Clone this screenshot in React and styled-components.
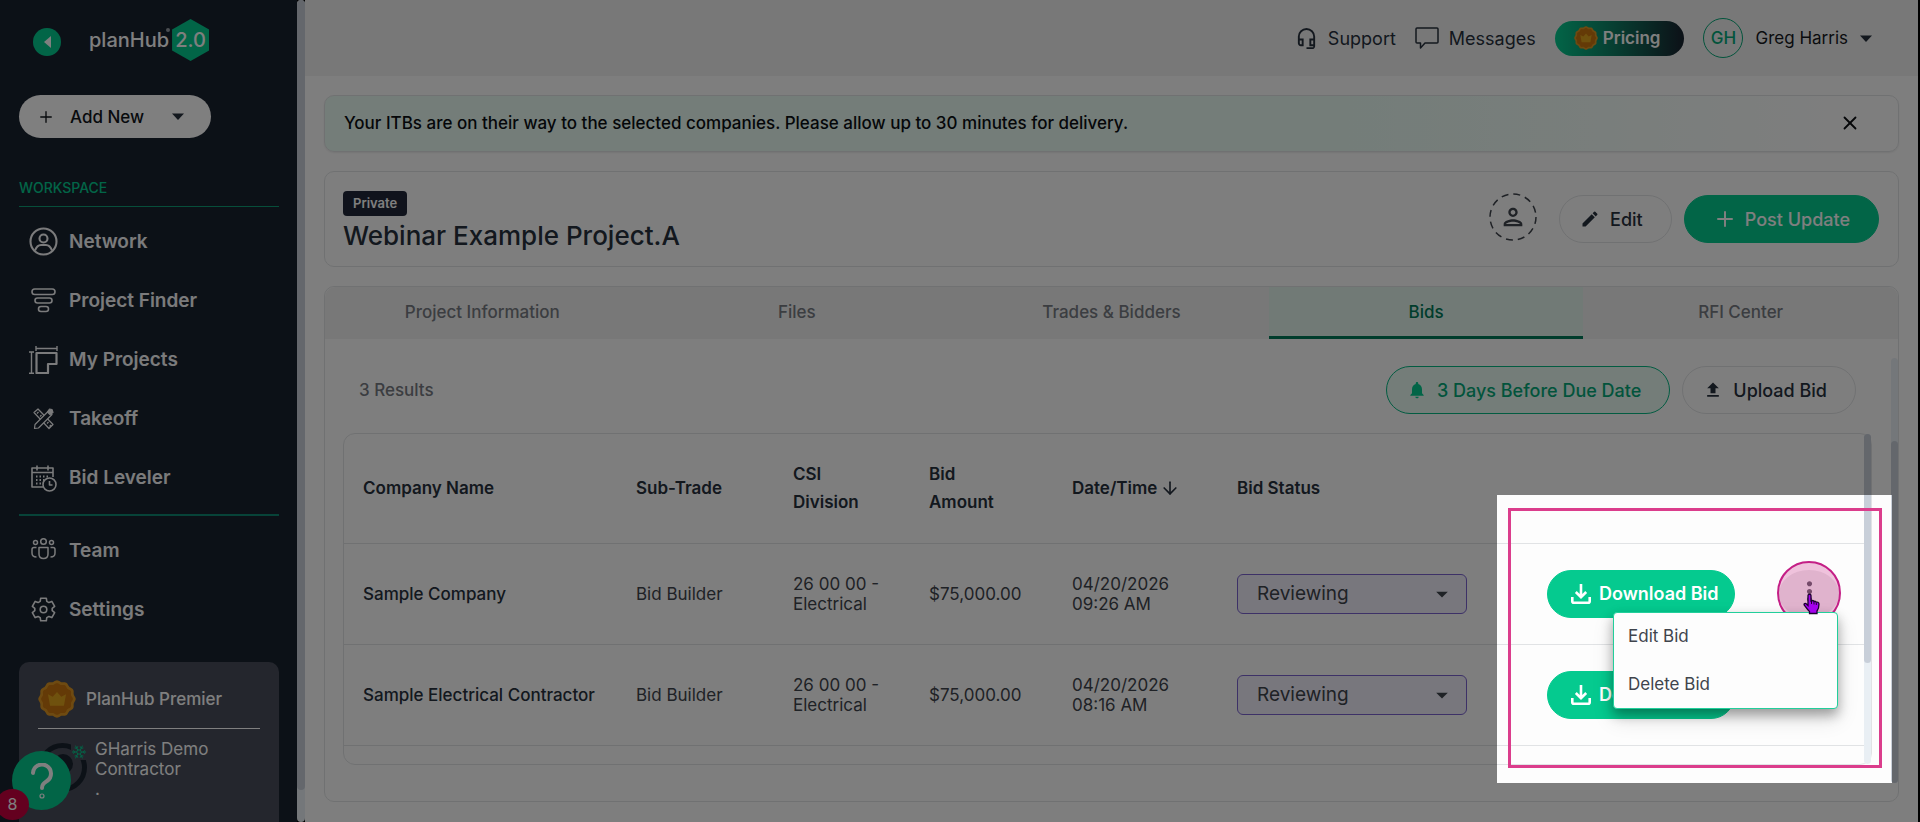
import React from 'react';
import styled, { createGlobalStyle } from 'styled-components';
import { MdOutlineHeadsetMic, MdEdit, MdNotifications, MdUpload, MdOutlinePerson, MdArrowDropDown, MdMoreVert } from 'react-icons/md';
import { Plus, X, ArrowDown, Snowflake } from 'lucide-react';

const colors = {
  green: '#05ca8f',
  greenDark: '#007a58',
  mint: '#e8fbf3',
  navy: '#19222f',
  ink: '#27303d',
  text: '#3f444c',
  muted: '#777b82',
  line: '#e1e3e5',
  paper: '#fdfdfd',
  grey: '#f1f1f1',
  thumb: '#c8cfd9',
  track: '#e9eff4',
  pink: '#db3d8c',
};

const GlobalStyle = createGlobalStyle`
  * {
    box-sizing: border-box;
  }
  body {
    margin: 0;
    background: #000;
    font-family: Inter, "Liberation Sans", sans-serif;
    color: ${colors.ink};
  }
  button, select {
    font: inherit;
    color: inherit;
    margin: 0;
  }
  a {
    color: inherit;
    text-decoration: none;
  }
  svg {
    display: block;
    flex-shrink: 0;
  }
`;

const Page = styled.div`
  position: relative;
  display: flex;
  height: 100vh;
  min-height: 800px;
  overflow: hidden;
  border-right: 2px solid #000;
`;

/* ---------- sidebar ---------- */

const Sidebar = styled.aside`
  display: flex;
  flex-direction: column;
  width: 297px;
  flex-shrink: 0;
  padding: 19px 18px 0 19px;
  background: ${colors.navy};
  color: #fff;
`;

const Track = styled.div`
  display: flex;
  flex-direction: column;
  flex-shrink: 0;
  width: ${props => props.$width || 7}px;
  margin: ${props => props.$margin || 0};
  padding-top: ${props => props.$start || 0}px;
  padding-bottom: ${props => props.$end || 0}px;
  background: ${colors.track};
  border-radius: 4px;
`;

const Thumb = styled.div`
  flex: 1;
  background: ${colors.thumb};
  border-radius: 4px;
`;

const LogoRow = styled.div`
  display: flex;
  align-items: center;
  height: 42px;
  padding-left: 14px;
`;

const Collapse = styled.button`
  display: flex;
  align-items: center;
  justify-content: center;
  width: 28px;
  height: 28px;
  margin-right: 28px;
  margin-top: 4px;
  padding: 0;
  border: 0;
  border-radius: 50%;
  background: ${colors.green};
`;

const Logo = styled.a`
  display: flex;
  align-items: center;
  font-size: 20px;
  font-weight: 500;
`;

const Reg = styled.span`
  align-self: flex-start;
  width: 4px;
  height: 4px;
  margin: 9px 2px 0 -3px;
  border-radius: 50%;
  background: #999fa6;
`;

const Hex = styled.span`
  display: flex;
  align-items: center;
  justify-content: center;
  width: 37px;
  height: 42px;
  background: ${colors.green};
  clip-path: polygon(50% 0, 100% 25%, 100% 75%, 50% 100%, 0 75%, 0 25%);
`;

const AddNew = styled.button`
  display: flex;
  align-items: center;
  width: 192px;
  height: 43px;
  margin-top: 34px;
  padding: 0 27px 0 18px;
  border: 0;
  border-radius: 22px;
  background: #fff;
  color: #10141a;
  font-size: 17px;
  font-weight: 500;
  span {
    flex: 1;
    padding-left: 15px;
    text-align: left;
  }
`;

const SectionTitle = styled.div`
  margin-top: 41px;
  padding-bottom: 9px;
  border-bottom: 1px solid #0f9d74;
  color: ${colors.green};
  font-size: 14px;
  font-weight: 500;
  line-height: 18px;
`;

const NavList = styled.nav`
  display: flex;
  flex-direction: column;
  padding-top: 5px;
`;

const NavItem = styled.a`
  display: flex;
  align-items: center;
  gap: 11px;
  height: 59px;
  padding-left: 10px;
  font-size: 19px;
  font-weight: 600;
  color: #f6f7f8;
  svg {
    width: 29px;
    height: 29px;
  }
`;

const Divider = styled.hr`
  width: 100%;
  margin: 7px 0 0;
  border: 0;
  border-top: 2px solid #0f8670;
`;

const PlanCard = styled.div`
  flex: 1;
  margin-top: 23px;
  padding: 18px 19px 0;
  border-radius: 10px 10px 0 0;
  background: #484d5a;
  color: #fff;
`;

const PlanRow = styled.div`
  display: flex;
  align-items: center;
  gap: 10px;
  padding-bottom: 10px;
  border-bottom: 1px solid #fff;
  font-size: 17px;
  font-weight: 500;
`;

const CompanyRow = styled.div`
  display: flex;
  gap: 8px;
  padding-top: 10px;
  font-size: 17px;
  line-height: 20px;
`;

const Avatar = styled.div`
  position: relative;
  width: 49px;
  height: 49px;
  margin-top: 4px;
  border: 5px solid ${colors.navy};
  border-radius: 50%;
  &::after {
    content: "";
    position: absolute;
    left: 10px;
    top: 6px;
    width: 20px;
    height: 20px;
    border-radius: 50%;
    background: ${colors.navy};
  }
  svg {
    position: absolute;
    right: -5px;
    top: -4px;
    background: #484d5a;
  }
`;

const HelpButton = styled.button`
  position: absolute;
  left: 12px;
  bottom: 12px;
  width: 59px;
  height: 59px;
  padding: 0;
  border: 0;
  border-radius: 50%;
  background: ${colors.green};
  display: flex;
  align-items: center;
  justify-content: center;
`;

const HelpCount = styled.span`
  position: absolute;
  left: -4px;
  bottom: 2px;
  width: 33px;
  height: 31px;
  border-radius: 50%;
  background: #c8003f;
  color: #fff;
  font-size: 16px;
  line-height: 30px;
  text-align: center;
`;

/* ---------- top bar and banners ---------- */

const Main = styled.div`
  display: flex;
  flex-direction: column;
  flex: 1;
  min-width: 0;
  background: ${colors.paper};
`;

const TopBar = styled.header`
  display: flex;
  align-items: center;
  justify-content: flex-end;
  gap: 19px;
  height: 76px;
  padding: 0 46px 0 20px;
  background: ${colors.grey};
  font-size: 18px;
`;

const TopLink = styled.a`
  display: flex;
  align-items: center;
  gap: 10px;
`;

const Pricing = styled.a`
  display: flex;
  align-items: center;
  gap: 5px;
  height: 35px;
  padding: 0 24px 0 19px;
  border-radius: 18px;
  background: linear-gradient(90deg, ${colors.green}, ${colors.navy});
  color: #fff;
  font-size: 17px;
  font-weight: 600;
`;

const UserMenu = styled.button`
  display: flex;
  align-items: center;
  gap: 12px;
  padding: 0;
  border: 0;
  background: none;
  font-size: 17px;
  color: #16191e;
`;

const Initials = styled.span`
  display: flex;
  align-items: center;
  justify-content: center;
  width: 40px;
  height: 40px;
  border: 1px solid #05a878;
  border-radius: 50%;
  color: #05a878;
  font-weight: 500;
`;

const Content = styled.main`
  display: flex;
  flex-direction: column;
  flex: 1;
  gap: 19px;
  padding: 19px 19px 20px;
`;

const Notice = styled.div`
  display: flex;
  align-items: center;
  justify-content: space-between;
  height: 57px;
  padding: 0 37px 1px 19px;
  border: 1px solid ${colors.line};
  border-radius: 10px;
  background: linear-gradient(90deg, ${colors.mint} 65%, ${colors.paper} 97%);
  box-shadow: 0 1px 2px rgba(0, 0, 0, .08);
  color: #0b0e12;
  font-size: 17px;
  font-weight: 500;
`;

const CloseButton = styled.button`
  padding: 0;
  border: 0;
  background: none;
`;

const ProjectCard = styled.section`
  display: flex;
  align-items: center;
  justify-content: space-between;
  height: 96px;
  padding: 0 19px 0 18px;
  border: 1px solid ${colors.line};
  border-radius: 10px;
`;

const ProjectName = styled.div`
  padding-top: 4px;
`;

const Chip = styled.span`
  display: inline-block;
  padding: 0 10px;
  border-radius: 4px;
  background: #202738;
  color: #fff;
  font-size: 13px;
  font-weight: 600;
  line-height: 25px;
`;

const Title = styled.h1`
  margin: 4px 0 0;
  font-size: 26px;
  font-weight: 500;
  line-height: 32px;
`;

const Actions = styled.div`
  display: flex;
  align-items: center;
  gap: 12px;
`;

const AssignButton = styled.button`
  width: 48px;
  height: 48px;
  margin: 0 10px 5px 0;
  padding: 0;
  border: 0;
  background: none;
`;

const Pill = styled.button`
  display: flex;
  align-items: center;
  justify-content: center;
  gap: ${props => props.$gap || 10}px;
  height: 48px;
  padding: ${props => props.$pad || '0 28px 0 20px'};
  border: 1px solid ${props => props.$border || colors.line};
  border-radius: 24px;
  background: ${props => props.$bg || 'transparent'};
  color: ${props => props.$color || colors.ink};
  font-size: 18px;
  font-weight: ${props => props.$weight || 500};
  white-space: nowrap;
`;

/* ---------- bids panel ---------- */

const Panel = styled.section`
  display: flex;
  flex-direction: column;
  flex: 1;
  border: 1px solid ${colors.line};
  border-radius: 10px;
`;

const Tabs = styled.div`
  display: flex;
  height: 52px;
  border-radius: 10px 10px 0 0;
  background: ${colors.grey};
`;

const Tab = styled.button`
  flex: 1;
  padding: 0;
  border: 0;
  border-bottom: 3px solid ${props => (props.$active ? colors.greenDark : 'transparent')};
  background: ${props => (props.$active ? '#e2f5ed' : 'transparent')};
  color: ${props => (props.$active ? colors.greenDark : colors.muted)};
  font-size: 17px;
  font-weight: 500;
`;

const PanelBody = styled.div`
  display: flex;
  flex: 1;
`;

const PanelContent = styled.div`
  flex: 1;
  min-width: 0;
  padding: 27px 19px 0 18px;
`;

const Toolbar = styled.div`
  display: flex;
  align-items: center;
  justify-content: space-between;
  padding: 0 16px;
  margin-bottom: 19px;
`;

const Results = styled.span`
  color: ${colors.muted};
  font-size: 17px;
  font-weight: 500;
`;

const TableFrame = styled.div`
  position: relative;
  display: flex;
  border: 1px solid ${colors.line};
  border-radius: 12px;
`;

const TableArea = styled.div`
  flex: 1;
  min-width: 0;
  padding-bottom: 18px;
`;

const Table = styled.table`
  width: 100%;
  table-layout: fixed;
  border-collapse: collapse;
  font-size: 17px;
  color: ${colors.text};
`;

const Th = styled.th`
  height: 109px;
  padding: 0 0 0 19px;
  border-bottom: 1px solid ${colors.line};
  color: ${colors.ink};
  font-weight: 600;
  line-height: 28px;
  text-align: left;
  svg {
    display: inline-block;
    margin-left: 3px;
    vertical-align: -4px;
  }
`;

const Td = styled.td`
  height: 101px;
  padding: 0 0 0 19px;
  border-bottom: 1px solid ${colors.line};
  line-height: 20px;
  font-weight: ${props => (props.$strong ? 500 : 400)};
  color: ${props => (props.$strong ? colors.ink : colors.text)};
`;

const StatusBox = styled.div`
  position: relative;
  width: 230px;
  svg {
    position: absolute;
    right: 11px;
    top: 6px;
    pointer-events: none;
  }
`;

const StatusSelect = styled.select`
  width: 100%;
  height: 40px;
  padding: 0 19px;
  border: 1px solid #7a62cf;
  border-radius: 6px;
  background: #f1effb;
  appearance: none;
  font-size: 19px;
`;

const RowActions = styled.div`
  position: relative;
  display: flex;
  align-items: center;
  justify-content: space-between;
  padding-right: 25px;
`;

const MoreButton = styled.button`
  position: relative;
  display: flex;
  align-items: center;
  justify-content: center;
  width: 60px;
  height: 48px;
  padding: 0 0 4px;
  border: 0;
  border-radius: 50%;
  background: ${props => (props.$open ? '#e6e6e6' : 'none')};
`;

const ClickRing = styled.span`
  position: absolute;
  left: -2px;
  top: -9px;
  width: 64px;
  height: 64px;
  border: 2px solid #c41f86;
  border-radius: 50%;
  background: rgba(214, 88, 160, .36);
`;

const Menu = styled.div`
  position: absolute;
  z-index: 5;
  right: 26px;
  top: 42px;
  display: flex;
  flex-direction: column;
  width: 225px;
  height: 97px;
  border: 1px solid #22cf9b;
  border-radius: 4px;
  background: ${colors.paper};
  box-shadow: 0 6px 12px rgba(0, 0, 0, .32), 0 10px 22px rgba(0, 0, 0, .12);
`;

const MenuItem = styled.button`
  flex: 1;
  padding: 0 14px;
  border: 0;
  background: none;
  color: ${colors.text};
  font-size: 17px;
  text-align: left;
`;

const Cursor = styled.svg`
  position: absolute;
  z-index: 6;
  right: 43px;
  top: 23px;
`;

// dims everything around the row menu
const Spotlight = styled.div`
  position: absolute;
  z-index: 50;
  right: -21px;
  top: 61px;
  width: 395px;
  height: 288px;
  padding: 13px 10px 15px 11px;
  box-shadow: 0 0 0 3000px rgba(0, 0, 0, .5);
  pointer-events: none;
`;

const SpotlightFrame = styled.div`
  height: 100%;
  border: 3px solid ${colors.pink};
`;

/* ---------- drawings ---------- */

const scallop = radius =>
  Array.from({ length: 144 }, (_, i) => {
    const a = (i / 144) * Math.PI * 2;
    const r = radius + Math.cos(a * 12) * 0.7;
    return `${(20 + r * Math.cos(a)).toFixed(2)},${(20 + r * Math.sin(a)).toFixed(2)}`;
  }).join(' ');

const PremierBadge = ({ size }) => (
  <svg width={size} height={size} viewBox="0 0 40 40">
    <polygon points={scallop(19)} fill="#dc9522" />
    <polygon points={scallop(16)} fill="#c8740e" />
    <path d="M10.500 15l5 2.500 4.500-5 4.500 5 5-2.500-2.200 12H12.700z" fill="#dfa21c" />
  </svg>
);

const Caret = ({ color = colors.ink }) => (
  <svg width="12" height="7" viewBox="0 0 12 7"><path d="M0 0.500h12L6 7z" fill={color} /></svg>
);

const DownloadIcon = () => (
  <svg width="20" height="20" viewBox="0 0 20 20" fill="none" stroke="#fff" strokeWidth="2.600">
    <path d="M1.300 13v4.200q0 1.500 1.500 1.500h14.400q1.500 0 1.500-1.500V13" />
    <path d="M10 0v13M4.800 8l5.200 5.200L15.200 8" />
  </svg>
);

const Stroke = ({ children, width = 1.6 }) => (
  <svg viewBox="0 0 29 29" fill="none" stroke="currentColor" strokeWidth={width} strokeLinejoin="round">
    {children}
  </svg>
);

const NetworkIcon = () => (
  <Stroke width={2.1}>
    <circle cx="14.500" cy="14.500" r="13" />
    <circle cx="14.500" cy="11.500" r="4" />
    <path d="M6 23.500c1.500-4 4-5.500 6-5.500h5c2 0 4.500 1.500 6 5.500" />
  </Stroke>
);

const FinderIcon = () => (
  <Stroke>
    <rect x="3" y="3" width="23" height="5.500" rx="2.700" />
    <rect x="6" y="12" width="17" height="5" rx="2.500" />
    <rect x="9.500" y="20.500" width="10" height="5" rx="2.500" />
  </Stroke>
);

const ProjectsIcon = () => (
  <Stroke>
    <path d="M7.500 8h20v11h-8.500v9H7.500z" strokeWidth="2.200" />
    <path d="M7 3.500h21M7 1v5M28 1v5M2.500 7v21M0 7h5M0 28.300h5" strokeWidth="1.400" />
  </Stroke>
);

const TakeoffIcon = () => (
  <Stroke width={1.2}>
    <path d="M5 8.500l4-3.500L24 20.500l-4 4zM8 9.500l1.500-1.500M11 12.500l1.500-1.500M18 19.500l1.500-1.500M20.500 22.500l1.500-1.500" />
    <path d="M5.500 24.500l.5-4L19.500 7l3.500 3.500L9.500 24z" fill={colors.navy} />
    <path d="M18.500 8l2-3 2.500.500 1 3-3 2z" fill="currentColor" />
  </Stroke>
);

const LevelerIcon = () => (
  <Stroke>
    <path d="M14.500 24H3V5h21v9M3 9.500h21M8 2.500v5M19 2.500v5" />
    <path d="M7 13.500h14M7 17h8M7 20.500h6" strokeWidth="1.800" strokeDasharray="1.500 2" />
    <circle cx="20.500" cy="21.500" r="6.500" fill={colors.navy} />
    <path d="M20.500 18v4h3" />
  </Stroke>
);

const TeamIcon = () => (
  <Stroke width={1.5}>
    <circle cx="14.500" cy="5.500" r="2.800" />
    <circle cx="6.500" cy="6.500" r="2" />
    <circle cx="22.500" cy="6.500" r="2" />
    <path d="M10 11.500h9v6.500c0 3-2 4.500-4.500 4.500S10 21 10 18z" />
    <path d="M7.500 11.500H5c-1.500 0-2 1-2 2V17c0 2.500 2 4 4.500 4M21.500 11.500H24c1.500 0 2 1 2 2V17c0 2.500-2 4-4.500 4" />
  </Stroke>
);

const gearPoints = Array.from({ length: 6 }, (_, i) => i * 60 - 90)
  .flatMap(deg => [[deg - 22, 8.8], [deg - 14, 11.6], [deg + 14, 11.6], [deg + 22, 8.8]])
  .map(([deg, r]) => {
    const a = (deg * Math.PI) / 180;
    return `${(14.5 + r * Math.cos(a)).toFixed(2)},${(14.5 + r * Math.sin(a)).toFixed(2)}`;
  })
  .join(' ');

const SettingsIcon = () => (
  <Stroke>
    <polygon points={gearPoints} />
    <circle cx="14.500" cy="14.500" r="3.300" />
  </Stroke>
);

const workspace = [
  ['Network', NetworkIcon],
  ['Project Finder', FinderIcon],
  ['My Projects', ProjectsIcon],
  ['Takeoff', TakeoffIcon],
  ['Bid Leveler', LevelerIcon],
];

const account = [
  ['Team', TeamIcon],
  ['Settings', SettingsIcon],
];

const tabs = ['Project Information', 'Files', 'Trades & Bidders', 'Bids', 'RFI Center'];

const bids = [
  { company: 'Sample Company', date: '04/20/2026', time: '09:26 AM', open: true },
  { company: 'Sample Electrical Contractor', date: '04/20/2026', time: '08:16 AM' },
];

const SideNav = () => (
  <Sidebar>
    <LogoRow>
      <Collapse aria-label="Collapse menu">
        <svg width="7" height="12" viewBox="0 0 7 12"><path d="M7 0v12L0 6z" fill="#fff" /></svg>
      </Collapse>
      <Logo href="#">planHub<Reg /><Hex>2.0</Hex></Logo>
    </LogoRow>
    <AddNew>
      <Plus size={18} strokeWidth={1.8} />
      <span>Add New</span>
      <Caret />
    </AddNew>
    <SectionTitle>WORKSPACE</SectionTitle>
    <NavList>
      {workspace.map(([label, Icon]) => <NavItem href="#" key={label}><Icon />{label}</NavItem>)}
    </NavList>
    <Divider />
    <NavList>
      {account.map(([label, Icon]) => <NavItem href="#" key={label}><Icon />{label}</NavItem>)}
    </NavList>
    <PlanCard>
      <PlanRow><PremierBadge size={38} />PlanHub Premier</PlanRow>
      <CompanyRow>
        <Avatar><Snowflake size={16} color={colors.green} strokeWidth={1.5} /></Avatar>
        <div>GHarris Demo<br />Contractor<br />.</div>
      </CompanyRow>
    </PlanCard>
  </Sidebar>
);

const BidRow = ({ bid }) => (
  <tr>
    <Td $strong>{bid.company}</Td>
    <Td>Bid Builder</Td>
    <Td>26 00 00 -<br />Electrical</Td>
    <Td>$75,000.00</Td>
    <Td>{bid.date}<br />{bid.time}</Td>
    <Td>
      <StatusBox>
        <StatusSelect aria-label={`Bid status for ${bid.company}`} defaultValue="Reviewing">
          <option>Reviewing</option>
        </StatusSelect>
        <MdArrowDropDown size={28} />
      </StatusBox>
    </Td>
    <Td>
      <RowActions>
        <Pill $bg={colors.green} $border={colors.green} $color="#fff" $weight={600} $gap={8} $pad="0 15px 0 23px">
          <DownloadIcon />
          Download Bid
        </Pill>
        {bid.open && (
          <>
            <MoreButton $open aria-label="More actions">
              <MdMoreVert size={31} />
              <ClickRing />
            </MoreButton>
            <Menu>
              <MenuItem>Edit Bid</MenuItem>
              <MenuItem>Delete Bid</MenuItem>
            </Menu>
            <Cursor width="18" height="22" viewBox="0 0 18 22">
              <path
                d="M5 2.500C5 .8 8 .8 8 2.500V8l1-.5c1 0 1.700.4 2 1 1-.5 1.900-.1 2.200.7 1-.4 2.800 0 2.800 1.800 0 3-.3 5-2 7v2.500H6.500V18.500C4.500 17 3 14.500 1.200 12 .5 10.500 2.500 9.800 3.500 11L5 12.500z"
                fill="#a400ee" stroke="#1d0030" strokeWidth="1.300"
              />
              <path d="M8.500 8v3M11 9v2.500M13.300 10v2" stroke="#1d0030" />
            </Cursor>
          </>
        )}
      </RowActions>
    </Td>
  </tr>
);

const BidsTable = () => (
  <TableFrame>
    <TableArea>
      <Table>
        <colgroup>
          <col style={{ width: 273 }} />
          <col style={{ width: 157 }} />
          <col style={{ width: 136 }} />
          <col style={{ width: 143 }} />
          <col style={{ width: 165 }} />
          <col style={{ width: 310 }} />
          <col />
        </colgroup>
        <thead>
          <tr>
            <Th>Company Name</Th>
            <Th>Sub-Trade</Th>
            <Th>CSI<br />Division</Th>
            <Th>Bid<br />Amount</Th>
            <Th>Date/Time<ArrowDown size={20} /></Th>
            <Th>Bid Status</Th>
            <Th aria-label="Actions" />
          </tr>
        </thead>
        <tbody>
          {bids.map(bid => <BidRow bid={bid} key={bid.company} />)}
        </tbody>
      </Table>
    </TableArea>
    <Track $end={101}><Thumb /></Track>
    <Spotlight><SpotlightFrame /></Spotlight>
  </TableFrame>
);

const App = () => (
  <Page>
    <GlobalStyle />
    <SideNav />
    <Track $width={8} $end={32}><Thumb /></Track>
    <Main>
      <TopBar>
        <TopLink href="#"><MdOutlineHeadsetMic size={23} />Support</TopLink>
        <TopLink href="#">
          <svg width="24" height="22" viewBox="0 0 24 22" fill="none" stroke="currentColor" strokeWidth="1.500" strokeLinejoin="round">
            <path d="M2 1h20q1 0 1 1v13q0 1-1 1H10l-4.500 5V16H2q-1 0-1-1V2q0-1 1-1z" />
          </svg>
          Messages
        </TopLink>
        <Pricing href="#"><PremierBadge size={24} />Pricing</Pricing>
        <UserMenu><Initials>GH</Initials>Greg Harris<Caret /></UserMenu>
      </TopBar>
      <Content>
        <Notice>
          Your ITBs are on their way to the selected companies. Please allow up to 30 minutes for delivery.
          <CloseButton aria-label="Dismiss"><X size={22} /></CloseButton>
        </Notice>
        <ProjectCard>
          <ProjectName>
            <Chip>Private</Chip>
            <Title>Webinar Example Project.A</Title>
          </ProjectName>
          <Actions>
            <AssignButton aria-label="Assign">
              <svg width="48" height="48" viewBox="0 0 48 48" fill="none" stroke={colors.text} strokeWidth="1.500">
                <circle cx="24" cy="24" r="23" strokeDasharray="7 5" />
                <MdOutlinePerson x="10" y="10" size={28} stroke="none" color={colors.text} />
              </svg>
            </AssignButton>
            <Pill><MdEdit size={20} />Edit</Pill>
            <Pill $bg={colors.green} $border={colors.green} $color="#fff" $gap={8} $pad="0 28px 0 28px">
              <Plus size={24} />
              Post Update
            </Pill>
          </Actions>
        </ProjectCard>
        <Panel>
          <Tabs role="tablist">
            {tabs.map(tab => (
              <Tab key={tab} role="tab" aria-selected={tab === 'Bids'} $active={tab === 'Bids'}>{tab}</Tab>
            ))}
          </Tabs>
          <PanelBody>
            <PanelContent>
              <Toolbar>
                <Results>3 Results</Results>
                <Actions>
                  <Pill $bg={colors.mint} $border="#05b883" $color="#05a878">
                    <MdNotifications size={20} color={colors.green} />
                    3 Days Before Due Date
                  </Pill>
                  <Pill><MdUpload size={20} />Upload Bid</Pill>
                </Actions>
              </Toolbar>
              <BidsTable />
            </PanelContent>
            <Track $margin="19px 0 18px" $start={83}><Thumb /></Track>
          </PanelBody>
        </Panel>
      </Content>
    </Main>
    <HelpButton aria-label="Help">
      <svg width="24" height="36" viewBox="0 0 24 36" fill="none" stroke="#fff" strokeWidth="4" strokeLinecap="round">
        <path d="M3 10a9 9 0 1 1 14 8c-3.500 2.500-5 3.500-5 7" />
        <circle cx="12" cy="33" r="0.600" />
      </svg>
    </HelpButton>
    <HelpCount>8</HelpCount>
  </Page>
);

export default App;
